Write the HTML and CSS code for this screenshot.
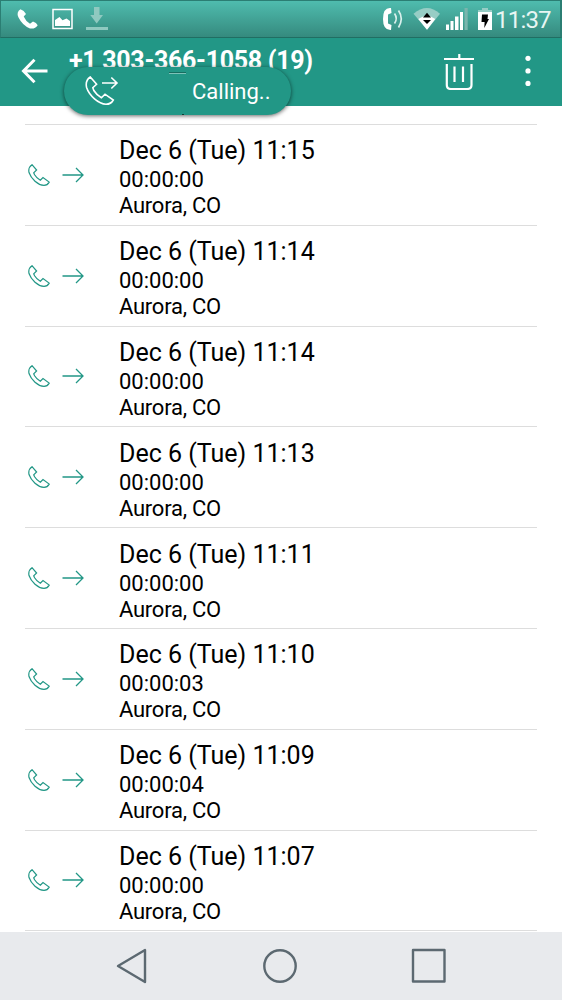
FILE: index.html
```html
<!DOCTYPE html>
<html lang="en">
<head>
<meta charset="utf-8">
<title>Call log</title>
<link rel="stylesheet" href="styles.css">
</head>
<body>
<svg class="defs" width="0" height="0">
  <symbol id="phone" viewBox="0 0 22 22"><path d="M4 .7L8.6 6L5.7 8.8L6.6 10.8Q8.6 14.2 12.3 16.2L15 13.5L21.2 18.1Q19.5 21.3 16 21.4Q11.5 21.2 7 17.2Q2.6 13.2 1 8.5Q0 3.3 4 .7Z"/></symbol>
  <symbol id="arrow" viewBox="0 0 22 16"><path d="M.5 8H21M14 1L21 8L14 15"/></symbol>
</svg>
<div class="screen">
  <div class="status">
    <svg class="status-left" width="120" height="38" viewBox="0 0 120 38">
      <path fill="#fff" d="M20.5 9.2Q16 12 18.4 17.2Q22.5 25.5 30 28.4Q35 29.3 37.7 25.2Q36.5 22.8 33 21.6L30 23.8Q25.5 21 23.7 16.6L26 14Q24 10.2 20.5 9.2Z"/>
      <rect x="53" y="9.5" width="19" height="19" fill="none" stroke="#fff" stroke-width="1.5"/>
      <path fill="#fff" d="M55 26V20L59.5 17L62.5 20.2L66.5 18.5L70 21V26Z"/>
      <path fill="#8fc9c0" d="M94 7H99.5V15H103L96.7 23.5L90.3 15H94ZM86 27H108V30H86Z"/>
    </svg>
    <svg class="status-right" width="114" height="38" viewBox="380 0 114 38">
      <path fill="#fff" d="M391 8Q383 7 383 19Q383 30.5 391 30L391.5 25L388 23.5V14.5L391.5 13Z"/>
      <path fill="none" stroke="#d9f0ec" stroke-width="1.7" d="M394.5 13.5Q398 18.5 394.5 23.5M398.5 10.5Q404 18.5 398.5 27.5"/>
      <path fill="#97cdc5" d="M413.5 13.8Q427 2.2 440 13.8L427 29.7Z"/>
      <path fill="#fff" d="M418.3 19Q427 13 435.3 19L427 29.7Z"/>
      <path fill="#000" d="M427 12.7L431 17.5H423ZM423 20H431L427 24Z"/>
      <path fill="#fff" d="M446 24.5H449V30H446ZM450.5 21H453.5V30H450.5ZM455 16.5H458.5V30H455ZM460 12H463V30H460Z"/>
      <path fill="#7ab5ad" d="M464.5 8H467.7V30H464.5Z"/>
      <path fill="#97cdc5" d="M482 8H488V10H492V13H478V10H482Z"/>
      <path fill="#fff" d="M478 12H492V30H478Z"/>
      <path fill="#000" d="M482 14.5H488L487.5 19H489L484.3 28L484.6 22H481.5Z"/>
    </svg>
    <span class="clock">11:37</span>
  </div>
  <header class="bar">
    <svg class="back" width="28" height="26" viewBox="0 0 28 26"><path d="M26.5 13H2.5M13.5 1.7L2.5 13L13.5 24.3"/></svg>
    <h1 class="number">+1 303-366-1058 (19)</h1>
    <svg class="trash" width="30" height="37" viewBox="0 0 30 37"><path d="M0 6H30M15.3 1V6M2.8 11V32Q2.8 36 7 36H23Q27.5 36 27.5 32V11M10.5 13.5V29M19 13.5V29"/></svg>
    <svg class="more" width="6" height="32" viewBox="0 0 6 32"><circle cx="3" cy="3.3" r="2.6"/><circle cx="3" cy="15.9" r="2.6"/><circle cx="3" cy="28.4" r="2.6"/></svg>
    <div class="toast">
      <svg class="toast-icon" width="34" height="30" viewBox="0 0 34 30">
        <path d="M5.3 1L11.6 8.3L7.8 11.7L8.8 14.5Q11.6 19 16.4 21.7L20 18.2L28.3 24Q26 28.2 21 28.3Q15.5 28 9.5 22.8Q3.5 17.5 1.6 11.5Q0 4.5 5.3 1ZM17 7H32M26.3 1.5L32 7L26.3 12.5"/>
      </svg>
      <span class="toast-text">Calling..</span>
      <i class="dash"></i>
      <i class="speck"></i>
    </div>
  </header>
  <ul class="list">
    <li class="row"><svg class="phone"><use href="#phone"/></svg><svg class="arrow"><use href="#arrow"/></svg><div class="info"><b>Dec 6 (Tue) 11:15</b><span>00:00:00</span><span class="place">Aurora, CO</span></div></li>
    <li class="row"><svg class="phone"><use href="#phone"/></svg><svg class="arrow"><use href="#arrow"/></svg><div class="info"><b>Dec 6 (Tue) 11:14</b><span>00:00:00</span><span class="place">Aurora, CO</span></div></li>
    <li class="row"><svg class="phone"><use href="#phone"/></svg><svg class="arrow"><use href="#arrow"/></svg><div class="info"><b>Dec 6 (Tue) 11:14</b><span>00:00:00</span><span class="place">Aurora, CO</span></div></li>
    <li class="row"><svg class="phone"><use href="#phone"/></svg><svg class="arrow"><use href="#arrow"/></svg><div class="info"><b>Dec 6 (Tue) 11:13</b><span>00:00:00</span><span class="place">Aurora, CO</span></div></li>
    <li class="row"><svg class="phone"><use href="#phone"/></svg><svg class="arrow"><use href="#arrow"/></svg><div class="info"><b>Dec 6 (Tue) 11:11</b><span>00:00:00</span><span class="place">Aurora, CO</span></div></li>
    <li class="row"><svg class="phone"><use href="#phone"/></svg><svg class="arrow"><use href="#arrow"/></svg><div class="info"><b>Dec 6 (Tue) 11:10</b><span>00:00:03</span><span class="place">Aurora, CO</span></div></li>
    <li class="row"><svg class="phone"><use href="#phone"/></svg><svg class="arrow"><use href="#arrow"/></svg><div class="info"><b>Dec 6 (Tue) 11:09</b><span>00:00:04</span><span class="place">Aurora, CO</span></div></li>
    <li class="row"><svg class="phone"><use href="#phone"/></svg><svg class="arrow"><use href="#arrow"/></svg><div class="info"><b>Dec 6 (Tue) 11:07</b><span>00:00:00</span><span class="place">Aurora, CO</span></div></li>
  </ul>
  <nav class="nav">
    <svg width="32" height="36" viewBox="0 0 32 36"><path d="M29 2V34L2 18Z"/></svg>
    <svg width="36" height="36" viewBox="0 0 36 36"><circle cx="18" cy="18" r="15.7"/></svg>
    <svg width="36" height="36" viewBox="0 0 36 36"><rect x="2" y="2" width="31.5" height="31.5"/></svg>
  </nav>
</div>
</body>
</html>
```
FILE: styles.css
```css
* { box-sizing: border-box; }
body { margin: 0; background: #fff; font-family: Roboto, "Liberation Sans", sans-serif; }
.defs { position: absolute; }
.screen { display: flex; flex-direction: column; height: 1000px; overflow: hidden; }
svg { display: block; flex: none; }

.status {
  display: flex; align-items: center; flex: none; height: 38px;
  background: linear-gradient(#4fbcae, #358a7e);
  border: 1px solid #2b7e73; border-bottom-color: #206e63; border-right-width: 2px;
}
.status-left { margin-left: -1px; }
.status-right { margin-left: auto; }
.clock { width: 66px; padding: 1px 0 0 1px; font-size: 24px; line-height: 36px; color: #e8f6f3; letter-spacing: -.8px; white-space: nowrap; }

.bar { position: relative; display: flex; align-items: flex-start; flex: none; height: 68px; background: #229786; }
.back, .trash, .toast-icon { fill: none; stroke: #fff; }
.back { margin: 20px 0 0 21px; stroke-width: 3; }
.number { margin: 7px 0 0 20px; width: 375px; font-size: 25px; line-height: 32px; font-weight: 700; letter-spacing: -.3px; color: #fff; white-space: nowrap; }
.trash { margin-top: 15px; stroke-width: 2.2; }
.more { margin: 17px 0 0 51px; fill: #fff; }

.toast {
  position: absolute; left: 64px; top: 29px; width: 227px; height: 48px;
  display: flex; align-items: center; padding-left: 21px;
  border-radius: 24px; background: #229786; box-shadow: 0 1px 4px rgba(0, 0, 0, .6);
}
.toast-icon { stroke-width: 1.6; }
.toast-text { margin-left: 73px; padding-top: 2px; font-size: 22px; line-height: 28px; color: #fff; }
.dash { position: absolute; left: 105px; top: 5px; width: 17px; height: 2px; border-top: 1px solid #176d60; background: #7cc2b8; }
.speck { position: absolute; left: 118px; top: 47px; width: 2px; height: 1px; background: #0d3c35; }

.list { flex: 1; min-height: 0; margin: 0; padding: 18px 25px 0; list-style: none; }
.list::before { content: ""; display: block; height: 1px; background: #ddd; }
.row { display: flex; align-items: center; height: 100.8px; border-bottom: 1px solid #ddd; }
.phone, .arrow { fill: none; stroke: #229786; }
.phone { width: 22px; height: 22px; margin-left: 3px; stroke-width: 1.2; }
.arrow { width: 22px; height: 16px; margin-left: 12px; stroke-width: 1.3; }
.info { display: flex; flex-direction: column; margin-left: 35px; padding-top: 5.2px; color: #000; }
.info b { font-size: 25px; line-height: 32px; font-weight: 400; }
.info span { font-size: 22px; line-height: 26px; }
.info .place { letter-spacing: -.25px; }

.nav { display: flex; flex: none; height: 68px; padding: 0 115px 0 116px; justify-content: space-between; align-items: center; background: #e8eaed; }
.nav svg { fill: none; stroke: #5c6971; stroke-width: 2.4; stroke-linejoin: round; }
```
